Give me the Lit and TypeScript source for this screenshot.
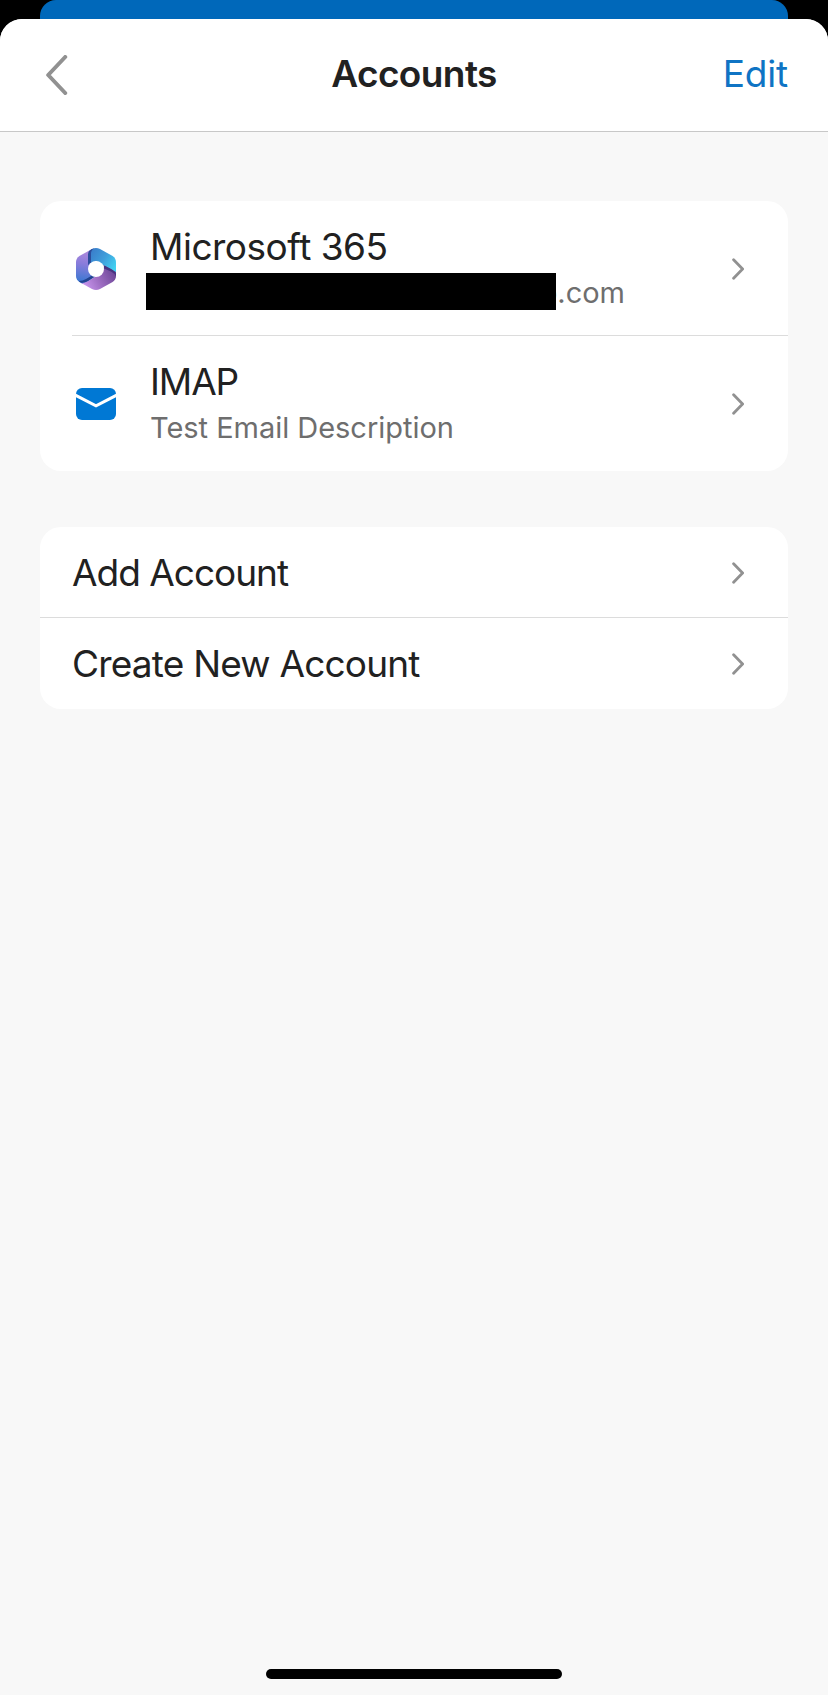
import { LitElement, html, css, svg } from "lit";
import { customElement, property } from "lit/decorators.js";

const microsoftLogo = svg`
  <svg width="40" height="42" viewBox="0 0 40 42">
    <defs>
      <linearGradient id="left" gradientUnits="userSpaceOnUse" x1="10" y1="5" x2="6" y2="33">
        <stop offset="0" stop-color="#a987dc" />
        <stop offset="0.4" stop-color="#887cdb" />
        <stop offset="1" stop-color="#3f78d2" />
      </linearGradient>
      <linearGradient id="right" gradientUnits="userSpaceOnUse" x1="15" y1="5" x2="39" y2="20">
        <stop offset="0" stop-color="#3a80cc" />
        <stop offset="0.5" stop-color="#3f9edb" />
        <stop offset="1" stop-color="#42d2f2" />
      </linearGradient>
      <linearGradient id="bottom" gradientUnits="userSpaceOnUse" x1="10" y1="38" x2="37" y2="24">
        <stop offset="0" stop-color="#c391e8" />
        <stop offset="0.5" stop-color="#9a6abf" />
        <stop offset="1" stop-color="#70499a" />
      </linearGradient>
      <clipPath id="hex">
        <path d="M16 1 Q20 -1 24 1 L36.600 8 Q40 10.300 40 14.300 V27.700 Q40 31.700 36.600 34 L24 41 Q20 43 16 41 L3.400 34 Q0 31.700 0 27.700 V14.300 Q0 10.300 3.400 8 Z" />
      </clipPath>
    </defs>
    <g clip-path="url(#hex)">
      <path d="M0 0H16V21L20 28L8 36H0Z" fill="url(#left)" />
      <path d="M4 35 C9 35.500 13 32.500 19 28.800 L29 18 H40 V42 H4Z" fill="url(#bottom)" />
      <path d="M14.500 0H40V24L28 17.500 L20 13 L14.500 16Z" fill="url(#right)" />
      <path d="M17 0 C13 2 12 4 12 8 V17 L15 15 V6 C15 4 15.300 2.500 18 0Z" fill="#2c4d9c" />
      <path d="M27.500 17 L36 21.500 Q39.500 23.500 40 26 V28.500 Q39 25.500 35 23.500 L28 20.500Z" fill="#483480" />
      <path d="M19 28.500 L12 33 Q8 35.500 4 34.500 L3 33 Q7 33 10 31 L16 27.500Z" fill="#22438f" />
    </g>
    <circle cx="20" cy="21" r="8" fill="#fff" />
  </svg>`;

const mailIcon = svg`
  <svg width="40" height="32" viewBox="0 0 40 32">
    <rect width="40" height="32" rx="6" fill="#0078d4" />
    <path d="M-1 7 L20 17.800 L41 7" fill="none" stroke="#fff" stroke-width="3" />
  </svg>`;

@customElement("list-row")
class ListRow extends LitElement {
  @property() heading = "";

  static styles = css`
    :host {
      display: flex;
      align-items: center;
      box-sizing: border-box;
      padding: 2px 44px 0 32px;
    }
    .body {
      flex: 1;
      min-width: 0;
    }
    .heading {
      font-size: 37px;
      line-height: 46px;
      letter-spacing: var(--heading-spacing, -0.5px);
      color: #212121;
      white-space: nowrap;
    }
    svg {
      display: block;
    }
  `;

  render() {
    return html`
      <slot name="icon"></slot>
      <div class="body">
        <div class="heading">${this.heading}</div>
        <slot></slot>
      </div>
      <svg width="12" height="22" viewBox="0 0 12 22" fill="none" stroke="#919191" stroke-width="2.800" stroke-linecap="round" stroke-linejoin="round">
        <path d="M1.600 1.800 L10.600 11 L1.600 20.200" />
      </svg>
    `;
  }
}

@customElement("app-root")
class AppRoot extends LitElement {
  static styles = css`
    :host {
      display: flex;
      flex-direction: column;
      box-sizing: border-box;
      height: 1695px;
      background: #000;
      font-family: Inter, "Liberation Sans", sans-serif;
    }
    .behind {
      flex: none;
      height: 19px;
      margin: 0 40px;
      border-radius: 16px 16px 0 0;
      background: #0068ba;
    }
    .sheet {
      flex: 1;
      display: flex;
      flex-direction: column;
      border-radius: 22px 22px 0 0;
      overflow: hidden;
      background: #f8f8f8;
    }
    .bar {
      display: grid;
      grid-template-columns: 1fr auto 1fr;
      align-items: center;
      box-sizing: border-box;
      height: 113px;
      padding: 0 40px 0 46px;
      border-bottom: 1px solid #c8c8c8;
      background: #fff;
    }
    .title {
      margin: 0 6px 2px 0;
      font-size: 37px;
      line-height: 46px;
      font-weight: 600;
      letter-spacing: -0.6px;
      color: #212121;
    }
    .edit {
      justify-self: end;
      margin-bottom: 2px;
      font-size: 37px;
      line-height: 46px;
      letter-spacing: -0.2px;
      color: #0f74c4;
    }
    .card {
      margin: 69px 40px 0;
      border-radius: 21px;
      background: #fff;
      overflow: hidden;
    }
    .card.actions {
      margin-top: 56px;
    }
    .account {
      height: 134px;
    }
    .account.last {
      height: 135px;
      padding-top: 1px;
      --heading-spacing: -1.1px;
    }
    .action {
      height: 91px;
      padding-top: 1px;
      --heading-spacing: -0.8px;
    }
    .action.first {
      height: 90px;
      padding-top: 2px;
      --heading-spacing: -1px;
    }
    .rule {
      height: 1px;
      background: #dcdcdc;
    }
    .rule.inset {
      margin-left: 32px;
    }
    .icon {
      display: flex;
      justify-content: center;
      flex: none;
      width: 48px;
      margin-right: 30px;
    }
    .sub {
      display: flex;
      margin: 1px 0 -1px;
      font-size: 29px;
      line-height: 44px;
      letter-spacing: -0.03px;
      color: #6e6e6e;
      white-space: nowrap;
    }
    .mask {
      position: relative;
      z-index: 1;
      flex: none;
      width: 410px;
      height: 37px;
      margin: 2px -16px 0 -4px;
      background: #000;
    }
    .home {
      width: 296px;
      height: 10px;
      margin: auto auto 16px;
      border-radius: 5px;
      background: #000;
    }
    svg {
      display: block;
    }
  `;

  render() {
    return html`
      <div class="behind"></div>
      <div class="sheet">
        <header class="bar">
          <svg width="22" height="40" viewBox="0 0 22 40" fill="none" stroke="#919191" stroke-width="4" stroke-linecap="round" stroke-linejoin="round">
            <path d="M19.200 2 L2.200 20 L19.200 38" />
          </svg>
          <h1 class="title">Accounts</h1>
          <span class="edit">Edit</span>
        </header>
        <section class="card">
          <list-row class="account" heading="Microsoft 365">
            <span class="icon" slot="icon">${microsoftLogo}</span>
            <div class="sub"><span class="mask"></span><span>o.com</span></div>
          </list-row>
          <div class="rule inset"></div>
          <list-row class="account last" heading="IMAP">
            <span class="icon" slot="icon">${mailIcon}</span>
            <div class="sub">Test Email Description</div>
          </list-row>
        </section>
        <section class="card actions">
          <list-row class="action first" heading="Add Account"></list-row>
          <div class="rule"></div>
          <list-row class="action" heading="Create New Account"></list-row>
        </section>
        <div class="home"></div>
      </div>
    `;
  }
}
